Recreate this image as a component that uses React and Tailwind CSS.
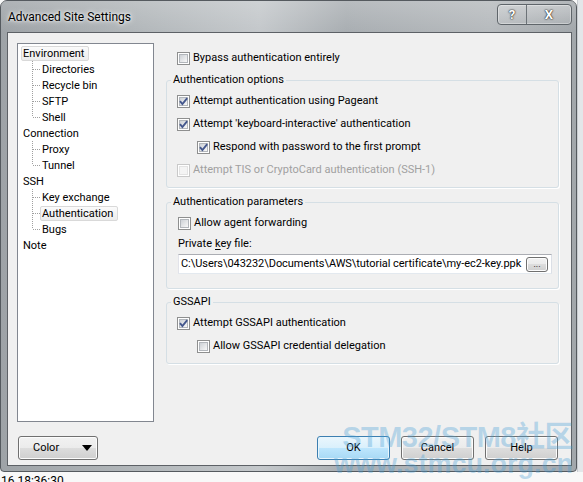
import React from 'react';

const tree = [
  { label: 'Environment', selected: true, children: ['Directories', 'Recycle bin', 'SFTP', 'Shell'] },
  { label: 'Connection', children: ['Proxy', 'Tunnel'] },
  { label: 'SSH', children: ['Key exchange', 'Authentication', 'Bugs'] },
  { label: 'Note', children: [] },
];

const TreeItem = ({ label, selected }) => (
  <span
    className={`flex h-[15px] items-center rounded-[2px] border px-[1px] pr-[4px] leading-[13px] ${
      selected ? 'border-[#d9d9d9] bg-[linear-gradient(#fbfbfb,#ececec)]' : 'border-transparent'
    }`}
  >
    {label}
  </span>
);

const Connector = ({ last }) => (
  <svg width="22" height="16" viewBox="0 0 22 16" className="shrink-0">
    <line x1="14.5" y1="0" x2="14.5" y2={last ? 8 : 16} stroke="#a0a0a0" strokeDasharray="1 1" />
    <line x1="15" y1="8.5" x2="22" y2="8.5" stroke="#a0a0a0" strokeDasharray="1 1" />
  </svg>
);

const Check = ({ checked = false, disabled = false }) => (
  <span
    className={`relative flex h-[13px] w-[13px] shrink-0 items-center justify-center border bg-white ${
      disabled ? 'border-[#c9c9c9]' : 'border-[#8e8f8f]'
    }`}
  >
    <span
      className={`h-[9px] w-[9px] border ${
        disabled ? 'border-[#e3e3e3] bg-[#f4f4f4]' : 'border-[#b2b6bb] bg-[linear-gradient(135deg,#cdd1d6,#f8f8f8)]'
      }`}
    />
    {checked && (
      <svg className="absolute left-0 top-0" width="11" height="11" viewBox="0 0 11 11">
        <path d="M2 5.2 4.4 8 9.2 2.2" fill="none" stroke="#44578d" strokeWidth="1.9" />
      </svg>
    )}
  </span>
);

const CheckRow = ({ label, checked, disabled, indent }) => (
  <div className={`flex h-[23px] items-center gap-[3px] ${indent ? 'pl-[30px]' : 'pl-[10px]'}`}>
    <Check checked={checked} disabled={disabled} />
    <span className={disabled ? 'text-[#a0a0a0]' : 'text-black'}>{label}</span>
  </div>
);

const Group = ({ title, className = '', children }) => (
  <fieldset className={`rounded-[3px] border border-[#d5dfe5] shadow-[1px_1px_0_#fff] ${className}`}>
    <legend className="ml-[4px] px-[2px] leading-[16px]">{title}</legend>
    {children}
  </fieldset>
);

const face =
  'rounded-[3px] border border-[#707070] bg-[linear-gradient(#f2f2f2,#ebebeb_50%,#dddddd_50%,#cfcfcf)] shadow-[inset_0_0_0_1px_#fcfcfc]';
const btn = `flex items-center justify-center ${face}`;

export default function App() {
  return (
    <div className="relative h-[482px] w-[583px] overflow-hidden bg-[#f8f8f8] font-['Roboto','Noto_Sans',sans-serif] text-[11px] text-black">
      <div className="flex h-[472px]">
        {/* Window */}
        <div className="flex h-[472px] w-[577px] shrink-0 flex-col rounded-t-[7px] rounded-b-[4px] border border-[#555a5f] bg-[linear-gradient(90deg,#9ea3a7,#b3b8bb_25%,#c4c8cb_45%,#a9aeb2_60%,#b6babd_85%,#a2a7ab)]">
          {/* Title bar */}
          <div className="flex h-[31px] shrink-0 items-start justify-between bg-[linear-gradient(rgba(255,255,255,0.18),rgba(255,255,255,0))]">
            <span className="mt-[9px] pl-[7px] text-[12px] leading-[14px] [text-shadow:0_0_6px_#fff,0_0_3px_#fff]">
              Advanced Site Settings
            </span>
            <div className="mr-[4px] mt-[3px] flex h-[21px] overflow-hidden rounded-[4px] border border-[#5f656a] bg-[linear-gradient(rgba(255,255,255,0.25),rgba(255,255,255,0.05))] shadow-[inset_0_0_0_1px_rgba(255,255,255,0.35)]">
              <span className="flex w-[29px] items-center justify-center border-r border-[#6c7277] text-[13px] font-bold text-white [text-shadow:0_0_2px_#222,0_0_1px_#000]">
                ?
              </span>
              <span className="flex w-[44px] items-center justify-center text-[13px] font-bold text-white [text-shadow:0_0_2px_#222,0_0_1px_#000]">
                X
              </span>
            </div>
          </div>

          {/* Client */}
          <div className="mb-[5px] ml-[6px] mr-[4px] flex flex-1 flex-col border border-[#5d6166] bg-[#f0f0f0] pl-[9px] pr-[12px] pt-[10px]">
            <div className="flex h-[379px] gap-[12px]">
              {/* Tree */}
              <div className="w-[137px] shrink-0 border border-[#828790] bg-white pt-[1px]">
                {tree.map((node) => (
                  <div key={node.label}>
                    <div className="flex h-[16px] items-center pl-[3px]">
                      <TreeItem label={node.label} selected={node.selected} />
                    </div>
                    {node.children.map((child, i) => (
                      <div key={child} className="flex h-[16px] items-center">
                        <Connector last={i === node.children.length - 1} />
                        <TreeItem label={child} selected={child === 'Authentication'} />
                      </div>
                    ))}
                  </div>
                ))}
              </div>

              {/* Right pane */}
              <div className="flex w-[393px] flex-col">
                <div className="mt-[7px] flex h-[16px] items-center gap-[3px] pl-[11px]">
                  <Check />
                  <span>Bypass authentication entirely</span>
                </div>

                <Group title="Authentication options" className="mt-[6px] pb-[5px] pt-[2px]">
                  <CheckRow label="Attempt authentication using Pageant" checked />
                  <CheckRow label="Attempt 'keyboard-interactive' authentication" checked />
                  <CheckRow label="Respond with password to the first prompt" checked indent />
                  <CheckRow label="Attempt TIS or CryptoCard authentication (SSH-1)" disabled />
                </Group>

                <Group title="Authentication parameters" className="mt-[6px] pb-[14px] pt-[2px]">
                  <div className="flex h-[23px] items-center gap-[3px] pl-[11px]">
                    <Check />
                    <span>Allow agent forwarding</span>
                  </div>
                  <div className="flex h-[18px] items-center pl-[11px]">
                    Private <span className="ml-[3px] underline underline-offset-2">k</span>ey file:
                  </div>
                  <div className="ml-[11px] mr-[6px] mt-[1px] flex h-[20px] items-center border border-[#abadb3] border-b-[#e3e9ef] border-l-[#e2e3ea] border-r-[#dbdfe6] bg-white pl-[2px] pr-[3px]">
                    <span className="min-w-0 flex-1 overflow-hidden whitespace-nowrap tracking-[-0.05px]">
                      {'C:\\Users\\043232\\Documents\\AWS\\tutorial certificate\\my-ec2-key.ppk'}
                    </span>
                    <span className={`${btn} h-[15px] w-[22px] shrink-0 items-end pb-[3px] text-[9px] leading-[8px]`}>...</span>
                  </div>
                </Group>

                <Group title="GSSAPI" className="mt-[5px] pb-[5px] pt-[2px]">
                  <CheckRow label="Attempt GSSAPI authentication" checked />
                  <CheckRow label="Allow GSSAPI credential delegation" indent />
                </Group>
              </div>
            </div>

            {/* Buttons */}
            <div className="mt-[14px] flex h-[24px]">
              <div className={`${face} ml-[1px] flex w-[80px] items-center justify-between pl-[14px] pr-[5px]`}>
                <span>Color</span>
                <svg width="10" height="6" viewBox="0 0 10 6">
                  <path d="M0 0h10L5 6z" fill="#000" />
                </svg>
              </div>
              <div className="ml-auto mr-[1px] flex gap-[11px]">
                <div className="flex w-[73px] items-center justify-center rounded-[3px] border border-[#3c7fb1] bg-[linear-gradient(#eaf6fd,#d9f0fc_50%,#bee6fd_50%,#a7d9f5)] shadow-[inset_0_0_0_1px_#e8f6fd]">
                  OK
                </div>
                <div className={`${btn} w-[73px]`}>Cancel</div>
                <div className={`${btn} w-[73px]`}>Help</div>
              </div>
            </div>
          </div>
        </div>
        <div className="flex-1 border-l border-[#c9cdd1] bg-[#e3e6e9]" />
      </div>

      <div className="pl-[1px] pt-[2px] text-[12px] leading-[14px]">16 18:36:30</div>

      {/* Watermark */}
      <div className="pointer-events-none absolute right-[10px] top-[423px] text-right font-['Liberation_Sans','Noto_Sans_CJK_SC',sans-serif] font-bold text-[#4a9fd6]/35">
        <div className="text-[29px] leading-[28px] tracking-[-0.5px]">STM32/STM8社区</div>
        <div className="text-[27px] leading-[26px]">www.stmcu.org.cn</div>
      </div>
    </div>
  );
}
